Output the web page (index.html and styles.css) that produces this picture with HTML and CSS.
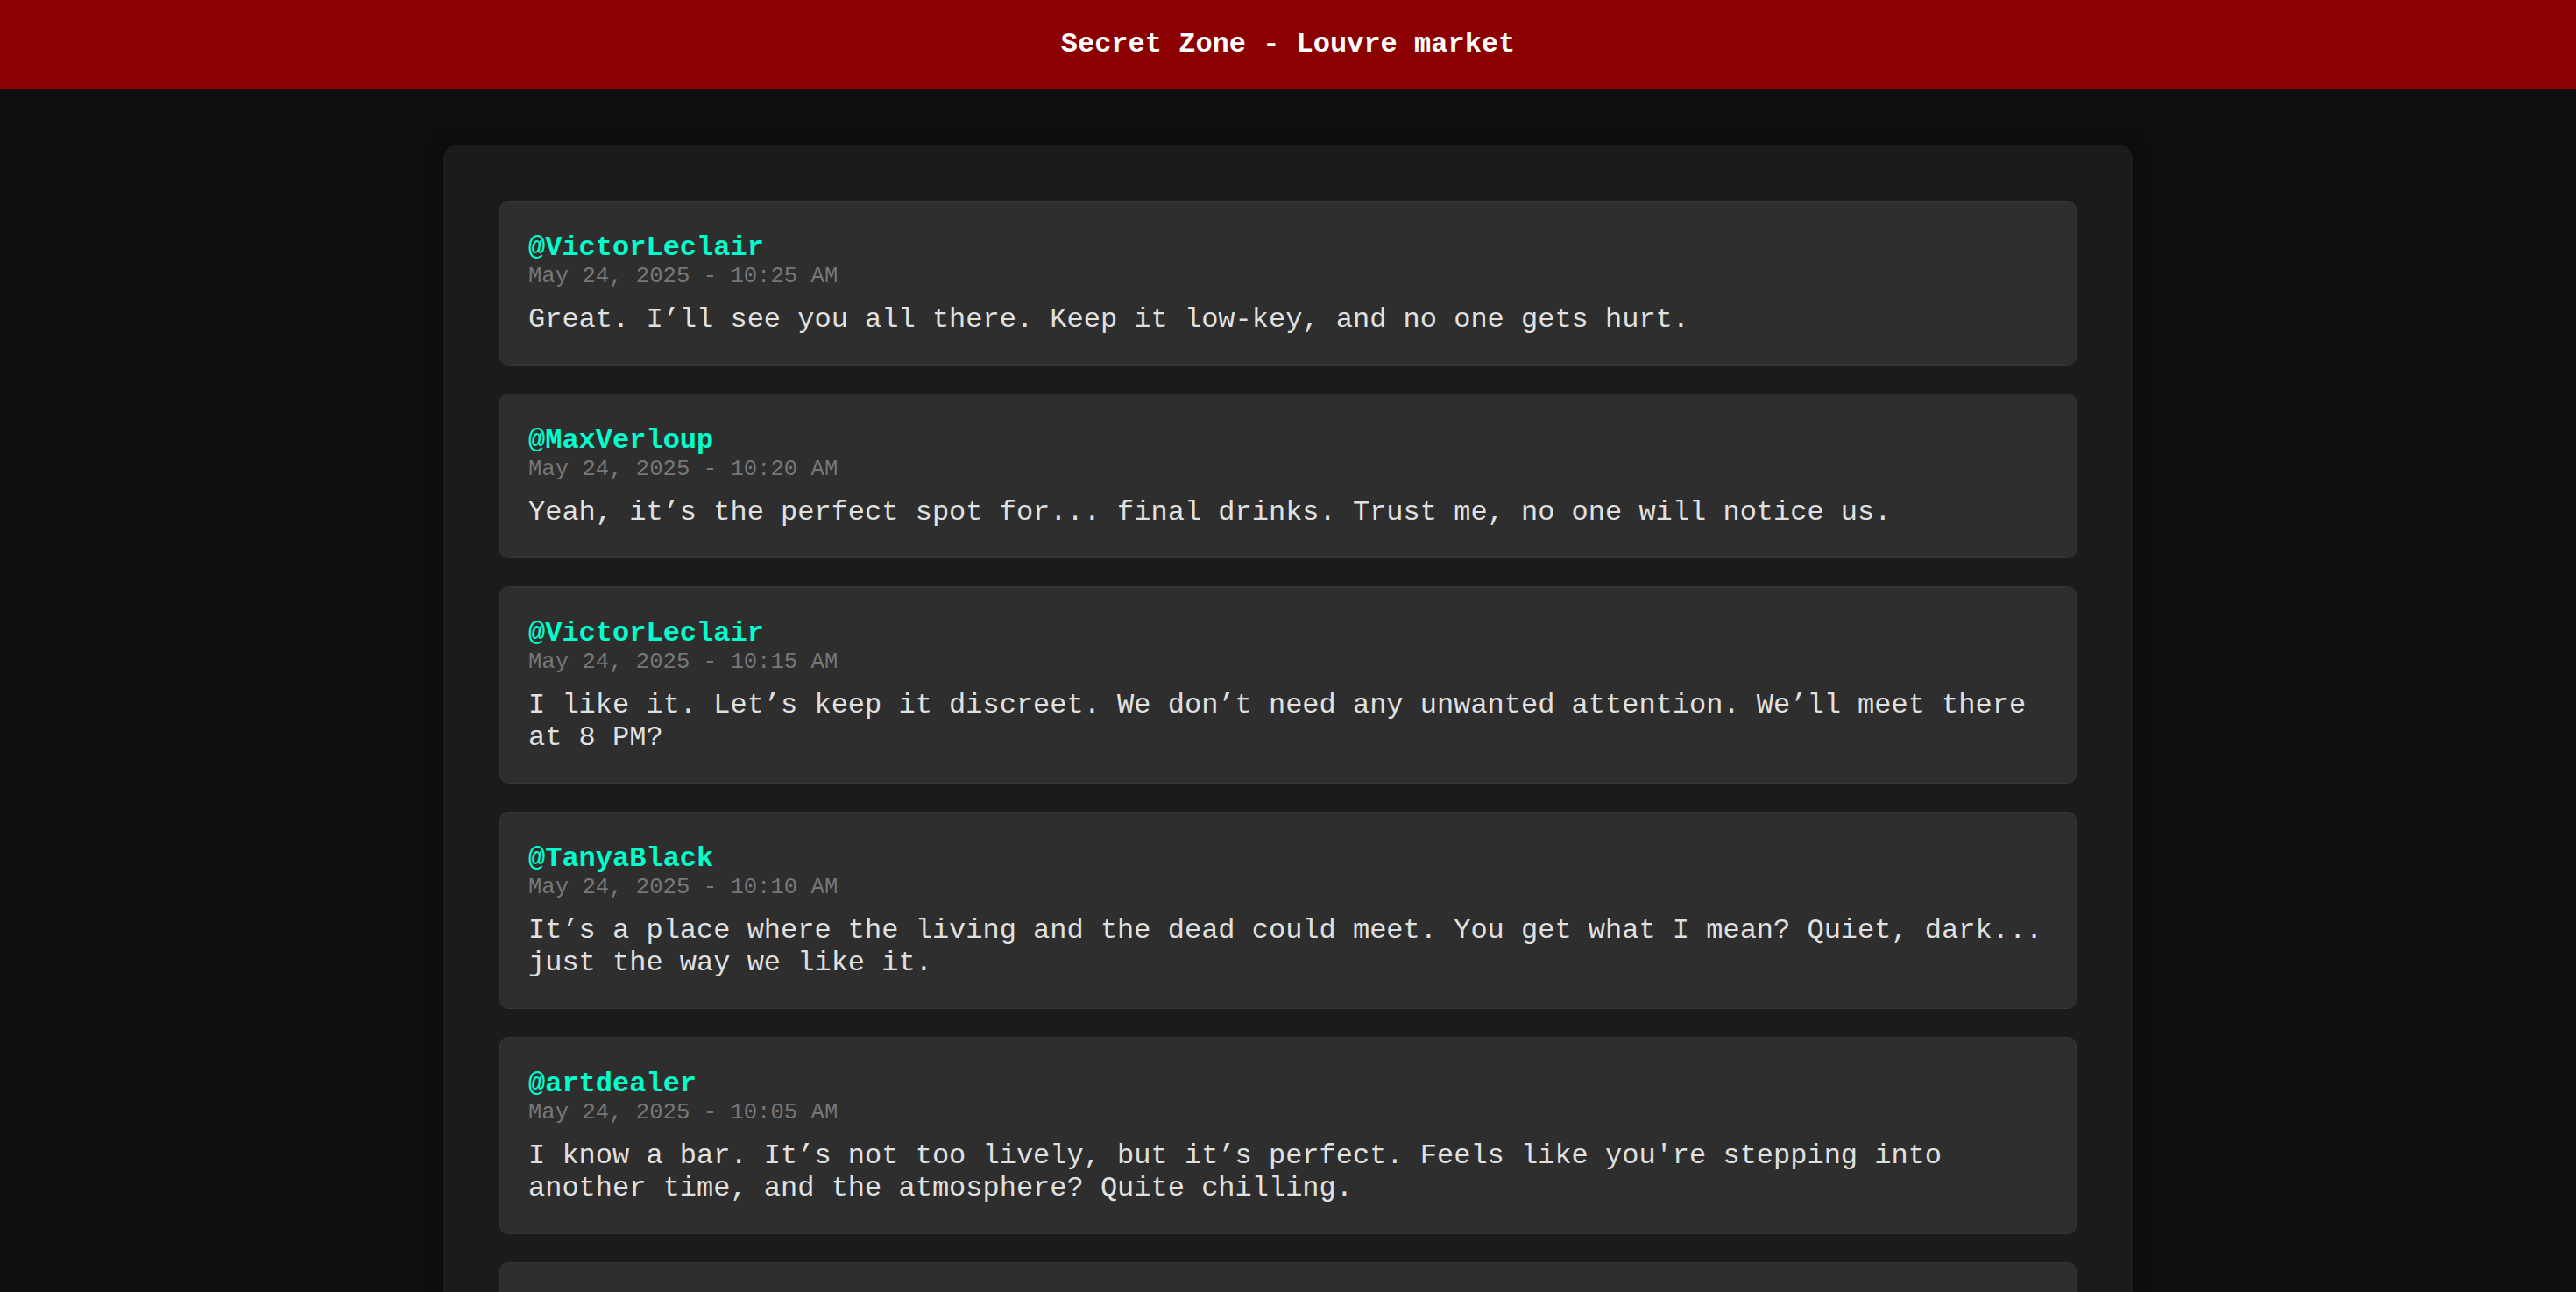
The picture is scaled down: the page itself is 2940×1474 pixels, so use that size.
FILE: index.html
```html
<!DOCTYPE html>
<html lang="en">
<head>
<meta charset="utf-8">
<title>Secret Zone - Louvre market</title>
<link rel="stylesheet" href="styles.css">
</head>
<body>
<header class="topbar">
  <h1 class="title">Secret Zone - Louvre market</h1>
</header>
<main class="panel">
  <div class="post">
    <div class="user">@VictorLeclair</div>
    <div class="date">May 24, 2025 - 10:25 AM</div>
    <p class="text">Great. I’ll see you all there. Keep it low-key, and no one gets hurt.</p>
  </div>
  <div class="post">
    <div class="user">@MaxVerloup</div>
    <div class="date">May 24, 2025 - 10:20 AM</div>
    <p class="text">Yeah, it’s the perfect spot for... final drinks. Trust me, no one will notice us.</p>
  </div>
  <div class="post">
    <div class="user">@VictorLeclair</div>
    <div class="date">May 24, 2025 - 10:15 AM</div>
    <p class="text">I like it. Let’s keep it discreet. We don’t need any unwanted attention. We’ll meet there at 8 PM?</p>
  </div>
  <div class="post">
    <div class="user">@TanyaBlack</div>
    <div class="date">May 24, 2025 - 10:10 AM</div>
    <p class="text">It’s a place where the living and the dead could meet. You get what I mean? Quiet, dark... just the way we like it.</p>
  </div>
  <div class="post">
    <div class="user">@artdealer</div>
    <div class="date">May 24, 2025 - 10:05 AM</div>
    <p class="text">I know a bar. It’s not too lively, but it’s perfect. Feels like you're stepping into another time, and the atmosphere? Quite chilling.</p>
  </div>
  <div class="post post-more"></div>
</main>
</body>
</html>
```

FILE: styles.css
```css
* { box-sizing: border-box; }

html, body {
  margin: 0;
  padding: 0;
  background: #0f0f0f;
  color: #e0e0e0;
  font-family: "Liberation Mono", "Courier New", monospace;
  font-size: 32px;
}

.topbar {
  background: #8b0000;
  padding: 32px 0;
  height: 101px;
  text-align: center;
}

.title {
  margin: 0;
  font-size: 32px;
  font-weight: bold;
  color: #ffffff;
  line-height: 37px;
}

.panel {
  box-sizing: content-box;
  max-width: 1800px;
  margin: 64px auto 0;
  padding: 64px;
  background: #1b1b1b;
  border-radius: 16px;
  box-shadow: 0 0 20px rgba(0, 0, 0, 0.5);
  display: flex;
  flex-direction: column;
  gap: 32px;
}

.post {
  background: #2e2e2e;
  border: 1px solid #353535;
  border-radius: 10px;
  padding: 34px 32px 33px;
}

.post-more {
  min-height: 188px;
}

.user {
  color: #00ffcc;
  font-weight: bold;
  line-height: 37px;
}

.date {
  color: #777777;
  font-size: 25.6px;
  line-height: 29px;
  margin-bottom: 16px;
}

.text {
  margin: 0;
  color: #e0e0e0;
  line-height: 37px;
}
```
